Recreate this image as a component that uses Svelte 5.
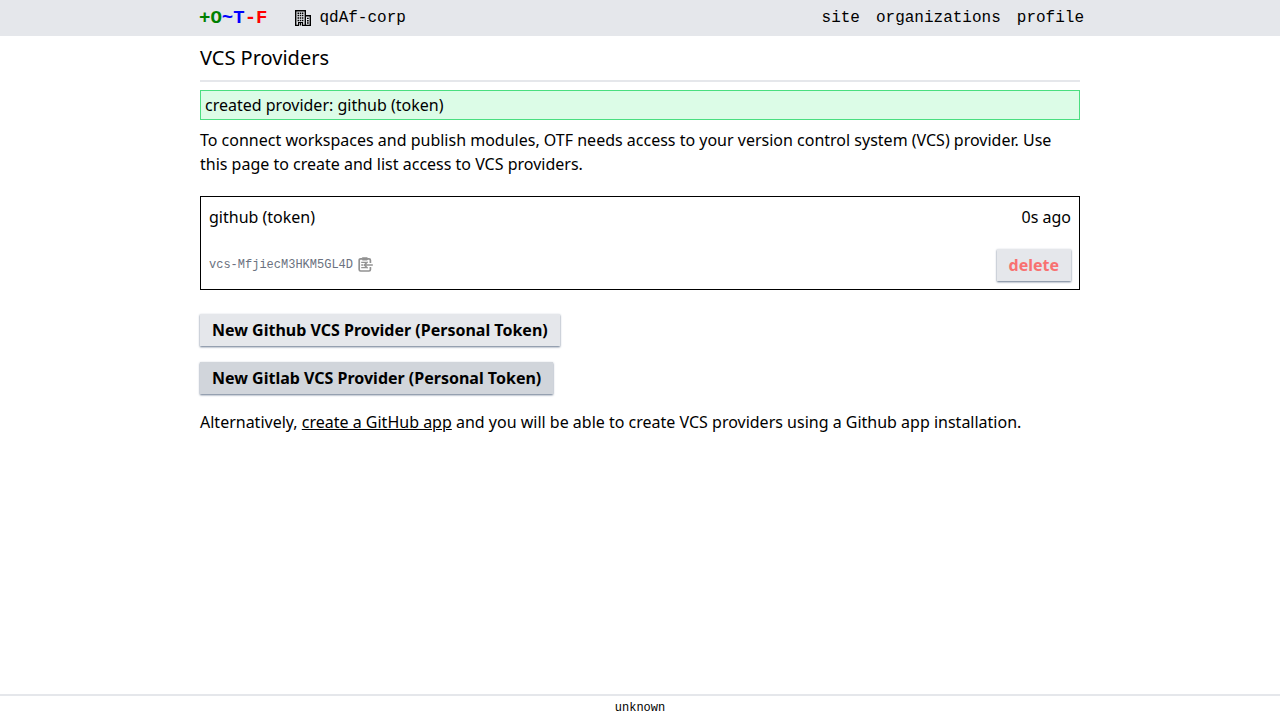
<script>
  const links = ['site', 'organizations', 'profile'];
  const logo = [
    { text: '+O', tone: 'green' },
    { text: '~T', tone: 'blue' },
    { text: '-F', tone: 'red' },
  ];
  const providers = [{ name: 'github (token)', id: 'vcs-MfjiecM3HKM5GL4D', age: '0s ago' }];
</script>

<div class="page">
  <header>
    <nav class="bar">
      <a class="logo" href="#home">{#each logo as part}<span class={part.tone}>{part.text}</span>{/each}</a>
      <a class="org" href="#org">
        <svg width="16" height="16" viewBox="0 0 16 16" fill="none" stroke="currentColor" aria-hidden="true">
          <path d="M.7 15.5V.7h9.6v14.8M10.3 5.7h5v9.8M0 15.4h4M7 15.4h9" stroke-width="1.4" />
          <path d="M3.6 15.5v-3h3.9v3M5.5 12.5v3" stroke-width="1.2" />
          <path d="M2.5 3.2h6.5M2.5 5.6h6.5M2.5 8h6.5M2.5 10.4h6.5" stroke-width="1.5" stroke-dasharray="1.5 .7" />
          <path d="M12 8.4h1.7M12 10.7h1.7M12 13h1.7" stroke-width="1.4" />
        </svg>
        <span>qdAf-corp</span>
      </a>
      <div class="links">
        {#each links as link}<a href={'#' + link}>{link}</a>{/each}
      </div>
    </nav>
  </header>

  <main>
    <h1>VCS Providers</h1>
    <div class="flash" role="status">created provider: github (token)</div>
    <p>
      To connect workspaces and publish modules, OTF needs access to your version control system (VCS) provider. Use this page to create and list access to VCS providers.
    </p>

    <div class="list">
      {#each providers as provider}
        <article>
          <div class="row">
            <span>{provider.name}</span>
            <span>{provider.age}</span>
          </div>
          <div class="row">
            <div class="identifier">
              <span>{provider.id}</span>
              <button class="copy" type="button" aria-label="Copy identifier">
                <svg width="16" height="16" viewBox="0 0 16 16" fill="none" stroke="currentColor" stroke-width="1.7" aria-hidden="true">
                  <path d="M5 1.8H3.6Q2.2 1.8 2.2 3.2v9.4q0 1.400 1.400 1.400h8.400q1.400 0 1.400-1.400v-2.600M10.200 1.800h1.800q1.400 0 1.400 1.400v2.800" />
                  <path d="M5.300 .8h5v2.200h-5z" fill="currentColor" stroke-width="1" />
                  <path d="M4.200 5.300h5M4.200 8h2M4.200 10.700h5" stroke-width="1.300" />
                  <path d="M15.800 8H7.400M10.600 4.800L7.400 8l3.200 3.200" stroke-width="1.500" />
                </svg>
              </button>
            </div>
            <button class="btn delete" type="button">delete</button>
          </div>
        </article>
      {/each}
    </div>

    <div class="actions">
      <button class="btn" type="button">New Github VCS Provider (Personal Token)</button>
      <button class="btn active" type="button">New Gitlab VCS Provider (Personal Token)</button>
    </div>

    <p>
      Alternatively, <a class="inline" href="#github-app">create a GitHub app</a> and you will be able to create VCS providers using a Github app installation.
    </p>
  </main>

  <footer>unknown</footer>
</div>

<style>
  :global(body) {
    margin: 0;
    background: #fff;
  }
  .page {
    display: flex;
    flex-direction: column;
    min-height: 100vh;
    color: #000;
    font: 16px/24px 'Noto Sans', sans-serif;
  }
  .page * {
    box-sizing: border-box;
  }
  a {
    color: inherit;
    text-decoration: none;
  }
  p,
  h1 {
    margin: 0;
  }
  header {
    background: #e5e7eb;
    font-family: 'Liberation Mono', monospace;
  }
  .bar {
    display: flex;
    align-items: center;
    width: 100%;
    max-width: 888px;
    margin: 0 auto;
    padding: 4px 0 4px 3px;
  }
  .logo {
    font-size: 19px;
    font-weight: 700;
    line-height: 28px;
  }
  .green {
    color: #008000;
  }
  .blue {
    color: #00f;
  }
  .red {
    color: #f00;
  }
  .org {
    display: flex;
    align-items: center;
    gap: 8px;
    margin-left: 28px;
  }
  .org svg,
  .copy svg {
    display: block;
  }
  .links {
    display: flex;
    gap: 16px;
    margin-left: auto;
  }
  main {
    display: flex;
    flex: 1;
    flex-direction: column;
    gap: 8px;
    width: 100%;
    max-width: 880px;
    margin: 0 auto;
    padding-top: 8px;
  }
  h1 {
    padding-bottom: 8px;
    border-bottom: 2px solid #e5e7eb;
    font-size: 20px;
    font-weight: 400;
    line-height: 28px;
  }
  .flash {
    padding: 2px 4px;
    border: 1px solid #4ade80;
    background: #dcfce7;
  }
  .list {
    padding: 12px 0 16px;
  }
  article {
    display: flex;
    flex-direction: column;
    gap: 20px;
    padding: 8px;
    border: 1px solid #000;
  }
  .row {
    display: flex;
    align-items: center;
    justify-content: space-between;
  }
  .identifier {
    display: flex;
    align-items: center;
    gap: 4px;
    color: #6b7280;
    font: 12px/16px 'Liberation Mono', monospace;
  }
  button {
    border: 0;
    cursor: pointer;
  }
  .copy {
    padding: 0;
    background: none;
    color: #929292;
  }
  .btn {
    padding: 4px 12px;
    background: #e5e7eb;
    box-shadow: 0 1px 2px #64748b;
    color: #000;
    font: 700 16px/24px 'Noto Sans', sans-serif;
  }
  .btn.active {
    background: #d1d5db;
  }
  .btn.delete {
    color: #f87171;
  }
  .actions {
    display: flex;
    flex-direction: column;
    align-items: flex-start;
    gap: 16px;
    padding-bottom: 8px;
  }
  .inline {
    text-decoration: underline;
  }
  footer {
    padding: 4px 0;
    border-top: 2px solid #e5e7eb;
    font: 12px/16px 'Liberation Mono', monospace;
    text-align: center;
  }
</style>
